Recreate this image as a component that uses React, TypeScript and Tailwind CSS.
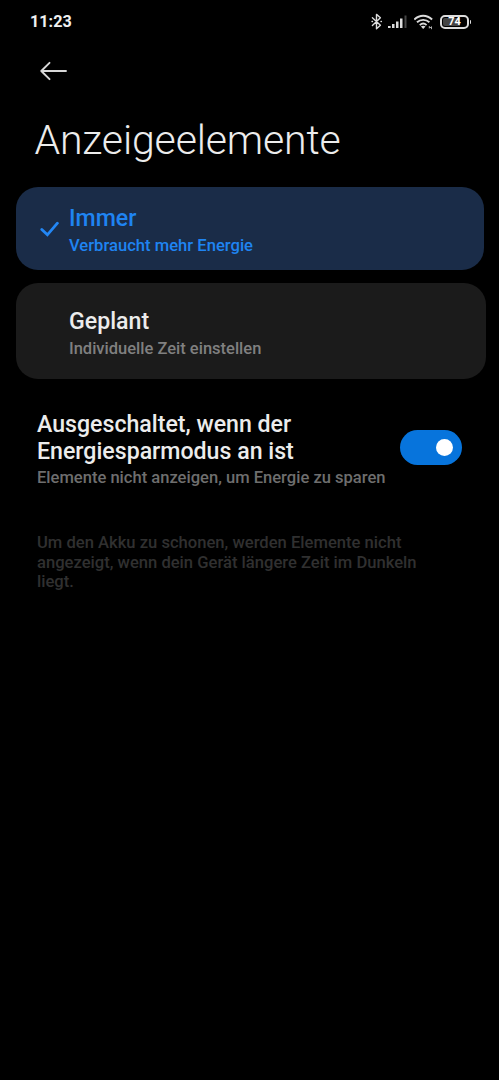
import React from 'react';

function StatusBar() {
  return (
    <header className="flex h-[43px] items-center justify-between pl-[30px] pr-[28px]">
      <span className="whitespace-nowrap text-[16.2px] leading-5 font-bold text-[#f0f0f0]">11:23</span>
      <div className="flex items-center text-[#dcdcdc]">
        <svg width="12" height="18" viewBox="0 0 12 18" fill="none" stroke="currentColor" strokeWidth="1.4" strokeLinejoin="round" strokeLinecap="round">
          <path d="M1.400 4.700 9.400 12.300 5.500 15.800V1.400l3.900 3.400-8 7.600" />
          <path d="M1 8.500h.5M10 8.500h.4" />
        </svg>
        <svg className="ml-[5px]" width="19" height="14" viewBox="0 0 19 14" fill="currentColor">
          <rect x="0" y="11" width="2.600" height="2" />
          <rect x="4" y="9" width="2.500" height="4" />
          <rect x="8" y="6.500" width="2.500" height="6.500" />
          <rect x="12" y="3.500" width="2.500" height="9.500" />
          <rect x="16.500" y="0.500" width="2" height="12.500" fill="#444" />
        </svg>
        <svg className="ml-[7px]" width="20" height="16" viewBox="0 0 20 16" fill="none" stroke="currentColor" strokeWidth="1.900">
          <path d="M.3 5.500C5.500 .4 12.800 .4 18.100 5.500M3 8.300c3.500-3.300 8.900-3.300 12.400 0M5.800 11.100c2-1.800 4.800-1.800 6.800 0" />
          <path d="m6.900 12.600 2.300 2.400 2.300-2.400c-1.300-1-3.300-1-4.600 0Z" fill="currentColor" stroke="none" />
          <path d="M15.300 12v2.400M17.500 12.400v2.800M15.300 13.500h2.200" strokeWidth="1" stroke="#aaa" />
        </svg>
        <div className="ml-[6px] flex h-[14px] w-[29px] items-center rounded-[5px] border-2 border-current p-px">
          <div className="flex h-full w-full items-center justify-center rounded-[2px] bg-linear-to-r from-[#444] from-75% to-black to-75% text-white">
            <span className="pt-px text-[11px] leading-[10px] font-bold">74</span>
          </div>
        </div>
        <div className="ml-px h-1 w-[1px] rounded-r bg-current" />
      </div>
    </header>
  );
}

function Check() {
  return (
    <svg className="ml-[23px] mr-[10px] mt-[1px] shrink-0" width="20" height="18" viewBox="0 0 20 18" fill="none" stroke="#2387f5" strokeWidth="2.800" strokeLinecap="round">
      <path d="M2.800 9.500 8.400 14.800 18.400 3.200" />
    </svg>
  );
}

export default function App() {
  return (
    <main className="h-[1080px] w-[499px] overflow-hidden bg-black font-['Roboto',sans-serif]">
      <StatusBar />
      <nav className="flex h-[55px] items-center pl-10">
        <button aria-label="Zurück">
          <svg width="28" height="20" viewBox="0 0 28 20" fill="none" stroke="#d8d8d8" strokeWidth="1.900" strokeLinecap="round" strokeLinejoin="round">
            <path d="M26 10H1.500M9.500 1.800 1.300 10 9.500 18.200" />
          </svg>
        </button>
      </nav>
      <h1 className="h-[89px] whitespace-nowrap pl-[34.500px] pt-[18px] text-[41px] leading-[48px] font-light tracking-[-0.150px] text-[#ececec]">Anzeigeelemente</h1>

      <section className="flex h-[83px] w-[468px] items-center ml-4 rounded-[22px] bg-[#1a2c48]">
        <Check />
        <div className="whitespace-nowrap pt-[6px] text-[#1f84f2]">
          <h2 className="text-[23.150px] leading-[28px] font-medium">Immer</h2>
          <p className="text-[16.600px] leading-[25px] font-medium">Verbraucht mehr Energie</p>
        </div>
      </section>
      <section className="mt-[13px] ml-4 flex h-[96px] w-[470px] items-center rounded-[22px] bg-[#1b1b1b] pl-[53px]">
        <div className="whitespace-nowrap pt-[7px]">
          <h2 className="text-[23.150px] leading-[28px] font-medium text-[#ececec]">Geplant</h2>
          <p className="text-[16.500px] leading-[25px] font-medium text-[#808080]">Individuelle Zeit einstellen</p>
        </div>
      </section>

      <section className="mt-[32px] flex h-[78px] items-start pl-[37px]">
        <div className="w-[363px] whitespace-nowrap">
          <h2 className="text-[23.150px] leading-[27px] font-medium text-[#ececec]">Ausgeschaltet, wenn der<br />Energiesparmodus an ist</h2>
          <p className="text-[16.560px] leading-[26px] font-medium text-[#6e6e6e]">Elemente nicht anzeigen, um Energie zu sparen</p>
        </div>
        <button role="switch" aria-checked="true" aria-label="Energiesparmodus" className="mt-[19px] flex h-[35px] w-[62px] items-center justify-end rounded-full bg-[#0774dc] pr-[9px]">
          <span className="size-[17px] rounded-full bg-white" />
        </button>
      </section>
      <p className="mt-[44px] whitespace-nowrap pl-[37px] text-[16.600px] leading-[19.500px] font-medium text-[#303030]">
        Um den Akku zu schonen, werden Elemente nicht<br />
        angezeigt, wenn dein Gerät längere Zeit im Dunkeln<br />
        liegt.
      </p>
    </main>
  );
}
